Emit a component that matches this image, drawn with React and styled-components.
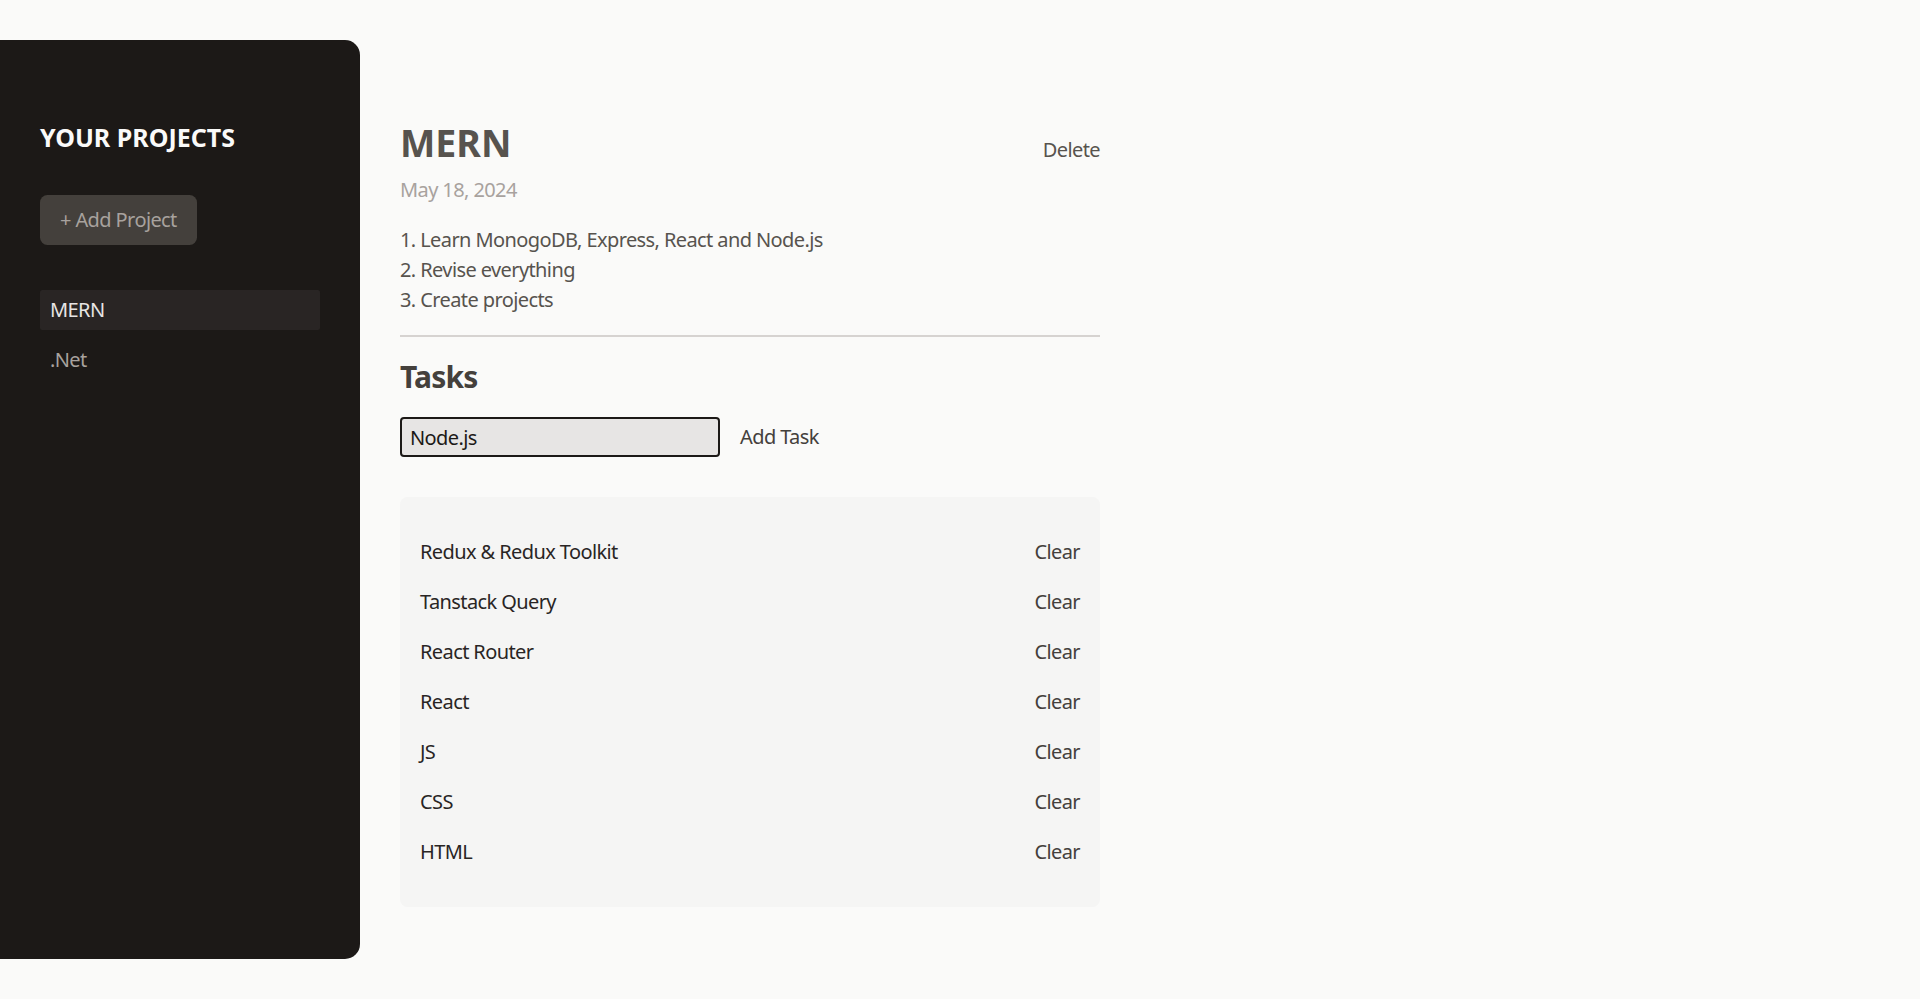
import React, { useState } from "react";
import styled, { createGlobalStyle } from "styled-components";

const project = {
  title: "MERN",
  date: "May 18, 2024",
  description: "1. Learn MonogoDB, Express, React and Node.js\n2. Revise everything\n3. Create projects",
};

const projects = ["MERN", ".Net"];

const tasks = [
  "Redux & Redux Toolkit",
  "Tanstack Query",
  "React Router",
  "React",
  "JS",
  "CSS",
  "HTML",
];

const App = () => {
  const [taskText, setTaskText] = useState("Node.js");

  return (
    <>
      <GlobalStyle />
      <Main>
        <Sidebar>
          <SidebarTitle>Your Projects</SidebarTitle>
          <AddProjectButton>+ Add Project</AddProjectButton>
          <ProjectList>
            {projects.map((name, index) => (
              <ProjectItem key={index}>
                <ProjectButton $active={index === 0}>{name}</ProjectButton>
              </ProjectItem>
            ))}
          </ProjectList>
        </Sidebar>

        <Content>
          <Header>
            <TitleRow>
              <Title>{project.title}</Title>
              <TextButton>Delete</TextButton>
            </TitleRow>
            <DateText>{project.date}</DateText>
            <Description>{project.description}</Description>
          </Header>

          <TasksHeading>Tasks</TasksHeading>
          <NewTaskRow>
            <TaskInput
              type="text"
              value={taskText}
              onChange={(e) => setTaskText(e.target.value)}
            />
            <AddTaskButton>Add Task</AddTaskButton>
          </NewTaskRow>

          <TaskList>
            {tasks.map((task, index) => (
              <TaskItem key={index}>
                <span>{task}</span>
                <ClearButton>Clear</ClearButton>
              </TaskItem>
            ))}
          </TaskList>
        </Content>
      </Main>
    </>
  );
};

const GlobalStyle = createGlobalStyle`
  * {
    box-sizing: border-box;
  }
  html, body {
    margin: 0;
    padding: 0;
    background: #fafaf9;
    font-family: "Noto Sans", "Open Sans", sans-serif;
    font-size: 20px;
    line-height: 30px;
    letter-spacing: -0.6px;
  }
  ul {
    list-style: none;
    margin: 0;
    padding: 0;
  }
  button {
    font-family: inherit;
    font-size: 20px;
    line-height: 30px;
    letter-spacing: inherit;
    border: none;
    background: none;
    padding: 0;
    cursor: pointer;
  }
`;

const Main = styled.main`
  display: flex;
  gap: 40px;
  height: calc(100vh - 80px);
  margin: 40px 0;
`;

const Sidebar = styled.aside`
  width: 360px;
  flex-shrink: 0;
  padding: 80px 40px;
  background: #1c1917;
  color: #fafaf9;
  border-radius: 0 15px 15px 0;
`;

const SidebarTitle = styled.h2`
  margin: 0 0 40px;
  font-size: 25px;
  line-height: 35px;
  font-weight: 700;
  letter-spacing: 0;
  text-transform: uppercase;
  color: #fafaf9;
`;

const AddProjectButton = styled.button`
  padding: 10px 20px;
  border-radius: 7.5px;
  background: #44403c;
  color: #a8a29e;

  &:hover {
    background: #57534e;
    color: #f5f5f4;
  }
`;

const ProjectList = styled.ul`
  margin-top: 40px;
`;

const ProjectItem = styled.li`
  padding: 5px 0;
`;

const ProjectButton = styled.button`
  display: block;
  width: 100%;
  text-align: left;
  padding: 5px 10px;
  border-radius: 2.5px;
  background: ${(p) => (p.$active ? "#292524" : "transparent")};
  color: ${(p) => (p.$active ? "#e7e5e4" : "#a8a29e")};

  &:hover {
    color: #e7e5e4;
    background: #292524;
  }
`;

const Content = styled.div`
  width: 700px;
  margin-top: 80px;
`;

const Header = styled.header`
  padding-bottom: 20px;
  margin-bottom: 20px;
  border-bottom: 2.5px solid #d6d3d1;
`;

const TitleRow = styled.div`
  display: flex;
  align-items: center;
  justify-content: space-between;
`;

const Title = styled.h1`
  margin: 0 0 10px;
  font-size: 37.5px;
  line-height: 45px;
  font-weight: 700;
  letter-spacing: 0;
  color: #57534e;
`;

const TextButton = styled.button`
  margin-top: 4px;
  color: #57534e;

  &:hover {
    color: #0c0a09;
  }
`;

const DateText = styled.p`
  margin: 0 0 20px;
  color: #a8a29e;
`;

const Description = styled.p`
  margin: 0;
  color: #57534e;
  white-space: pre-wrap;
`;

const TasksHeading = styled.h2`
  margin: 0 0 20px;
  font-size: 30px;
  line-height: 40px;
  font-weight: 700;
  letter-spacing: -0.8px;
  color: #44403c;
`;

const NewTaskRow = styled.div`
  display: flex;
  align-items: center;
  gap: 20px;
`;

const TaskInput = styled.input`
  width: 320px;
  height: 40px;
  padding: 3px 8px;
  font-family: inherit;
  font-size: 20px;
  line-height: 30px;
  letter-spacing: inherit;
  color: #1c1917;
  background: #e7e5e4;
  border: 2px solid #1c1917;
  border-radius: 4px;
  outline: none;
`;

const AddTaskButton = styled.button`
  color: #44403c;

  &:hover {
    color: #0c0a09;
  }
`;

const TaskList = styled.ul`
  margin-top: 40px;
  padding: 20px;
  border-radius: 7.5px;
  background: #f5f5f4;
`;

const TaskItem = styled.li`
  display: flex;
  justify-content: space-between;
  margin: 20px 0;
  color: #292524;
`;

const ClearButton = styled.button`
  color: #44403c;

  &:hover {
    color: #ef4444;
  }
`;

export default App;
